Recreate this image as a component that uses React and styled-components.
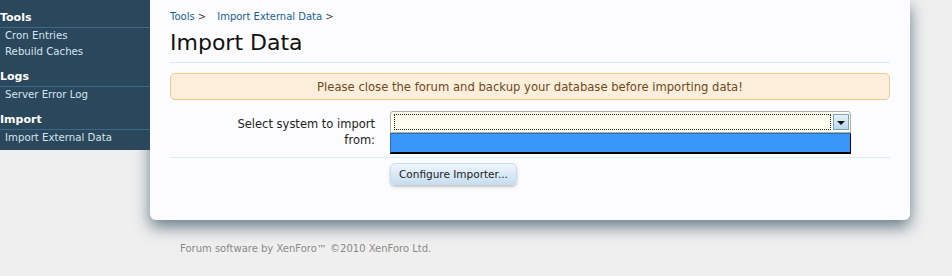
import React from "react";
import styled, { createGlobalStyle } from "styled-components";

const GlobalStyle = createGlobalStyle`
  html, body {
    margin: 0;
    padding: 0;
    background: #efefef;
    font-family: "DejaVu Sans", "Liberation Sans", sans-serif;
  }
`;

/* LAYOUT */
const Page = styled.div`
  width: 952px;
  height: 276px;
  overflow: hidden;
`;

const Columns = styled.div`
  display: flex;
  align-items: flex-start;
`;

/* SIDEBAR */
const Sidebar = styled.div`
  width: 150px;
  height: 150px;
  background-color: #2b475b;
  position: relative;
  z-index: 2;
  padding-top: 10px;
  box-sizing: border-box;
`;

const SideSection = styled.div`
  margin-bottom: 9px;
`;

const SideHeading = styled.div`
  font-size: 11px;
  font-weight: bold;
  color: #fff;
  line-height: 16px;
  padding-bottom: 1px;
  border-bottom: 1px solid #3a6a8a;
`;

const SideLink = styled.div`
  font-size: 10.2px;
  color: #d4e4f0;
  line-height: 16px;
  padding-left: 5px;
`;

/* MAIN PANEL */
const Panel = styled.div`
  width: 760px;
  height: 220px;
  box-sizing: border-box;
  background-color: #fcfcff;
  border-radius: 0 0 6px 6px;
  box-shadow: 0 7px 16px rgba(60, 85, 100, 0.75);
  padding: 10px 20px 0;
  position: relative;
  z-index: 1;
`;

const Breadcrumb = styled.div`
  display: flex;
  gap: 11px;
  font-size: 10px;
  color: #176093;
  line-height: 14px;
`;

const Crumb = styled.span`
  &::after {
    content: " >";
    color: #444;
  }
`;

const Title = styled.h1`
  margin: 4px 0 0;
  font-size: 22px;
  font-weight: normal;
  color: #111;
  line-height: 30px;
  padding-bottom: 4px;
  border-bottom: 1px solid #d7edfc;
`;

const Notice = styled.div`
  margin-top: 10px;
  height: 27px;
  box-sizing: border-box;
  border: 1px solid #f1c98f;
  border-radius: 5px;
  background-color: #fdefdc;
  color: #6d4a1c;
  font-size: 11.6px;
  display: flex;
  align-items: center;
  justify-content: center;
`;

const FormRow = styled.div`
  display: grid;
  grid-template-columns: 205px 461px;
  column-gap: 15px;
  padding: 11px 0 3px;
  border-bottom: 1px solid #d7edfc;
`;

const Label = styled.div`
  text-align: right;
  font-size: 11.5px;
  color: #222;
  line-height: 16px;
  padding: 5px 0 0 50px;
`;

const SelectWrap = styled.div`
  width: 461px;
`;

const SelectBox = styled.div`
  height: 22px;
  box-sizing: border-box;
  border: 1px solid #a9b1b5;
  border-radius: 3px 3px 0 0;
  background-color: #fffff0;
  display: flex;
  align-items: center;
  padding: 2px 1px 2px 3px;
  gap: 2px;
`;

const FocusRect = styled.div`
  flex: 1;
  height: 14px;
  border: 1px dotted #222;
`;

const ArrowButton = styled.div`
  width: 16px;
  height: 16px;
  box-sizing: border-box;
  border: 1px solid #7aa5c0;
  background: linear-gradient(#e4f1fa, #bcd9ec);
  display: flex;
  align-items: center;
  justify-content: center;
`;

const Arrow = styled.div`
  width: 0;
  height: 0;
  border-left: 4px solid transparent;
  border-right: 4px solid transparent;
  border-top: 4px solid #111;
  margin-top: 1px;
`;

const OptionList = styled.div`
  height: 21px;
  box-sizing: border-box;
  background-color: #3897f7;
  border: 1px solid #2a6cb0;
  border-right-color: #000;
  border-bottom: 2px solid #000;
`;

const Actions = styled.div`
  padding: 5px 0 0 220px;
`;

const Button = styled.div`
  display: inline-block;
  font-size: 10.5px;
  color: #222;
  line-height: 20px;
  padding: 0 8px;
  border: 1px solid #c9dcec;
  border-radius: 5px;
  background: linear-gradient(#eef5fc, #c8def1);
  box-shadow: 0 2px 3px rgba(0, 0, 0, 0.22);
`;

/* FOOTER */
const Footer = styled.div`
  padding: 23px 0 0 180px;
  font-size: 10px;
  color: #8a8a8a;
`;

const sections = [
  { title: "Tools", links: ["Cron Entries", "Rebuild Caches"] },
  { title: "Logs", links: ["Server Error Log"] },
  { title: "Import", links: ["Import External Data"] },
];

export default function App() {
  return (
    <Page>
      <GlobalStyle />
      <Columns>
        <Sidebar>
          {sections.map((s) => (
            <SideSection key={s.title}>
              <SideHeading>{s.title}</SideHeading>
              {s.links.map((l) => (
                <SideLink key={l}>{l}</SideLink>
              ))}
            </SideSection>
          ))}
        </Sidebar>
        <Panel>
          <Breadcrumb>
            <Crumb>Tools</Crumb>
            <Crumb>Import External Data</Crumb>
          </Breadcrumb>
          <Title>Import Data</Title>
          <Notice>Please close the forum and backup your database before importing data!</Notice>
          <FormRow>
            <Label>Select system to import from:</Label>
            <SelectWrap>
              <SelectBox>
                <FocusRect />
                <ArrowButton>
                  <Arrow />
                </ArrowButton>
              </SelectBox>
              <OptionList />
            </SelectWrap>
          </FormRow>
          <Actions>
            <Button>Configure Importer...</Button>
          </Actions>
        </Panel>
      </Columns>
      <Footer>Forum software by XenForo™ ©2010 XenForo Ltd.</Footer>
    </Page>
  );
}
